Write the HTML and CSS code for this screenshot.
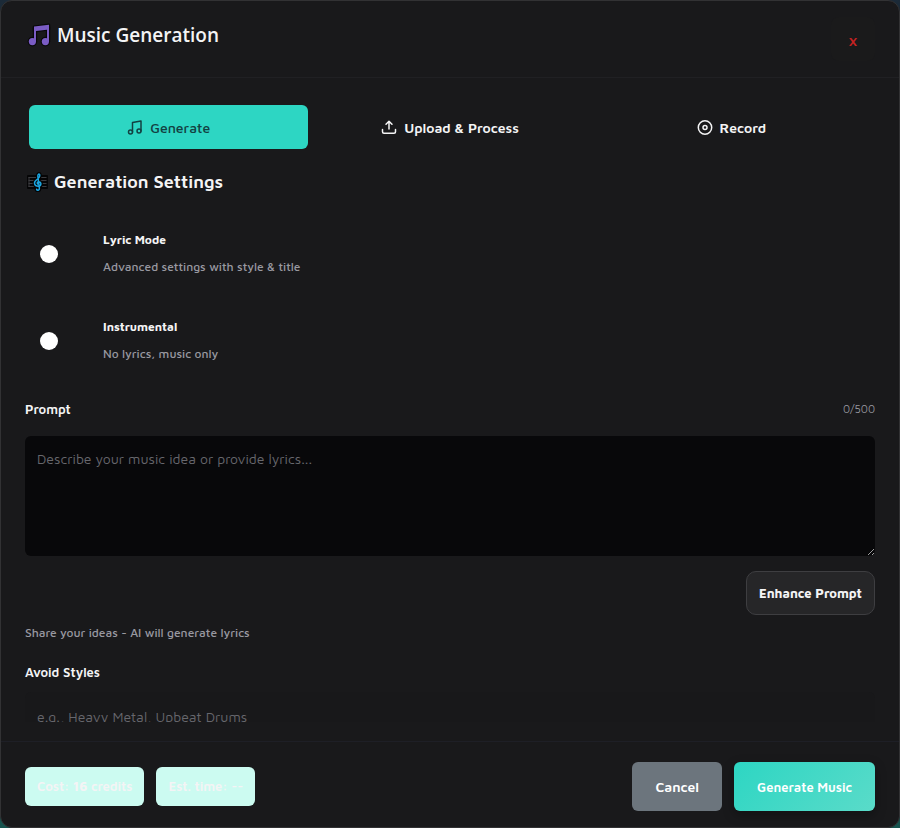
FILE: index.html
```html
<!DOCTYPE html>
<html lang="en">
<head>
<meta charset="utf-8">
<title>Music Generation</title>
<link rel="stylesheet" href="styles.css">
</head>
<body>
<main class="dialog" role="dialog" aria-labelledby="dialog-title">
  <header class="header">
    <h1 class="title" id="dialog-title">
      <svg class="title-icon" viewBox="0 0 24 24" aria-hidden="true">
        <g stroke="#08080a" stroke-width="2.4" stroke-linejoin="round" fill="#08080a">
          <path d="M7 3.600 22 1.800V6.400L7 8.200z"/><path d="M7 5h2v14H7zM20 4h2v14h-2z"/>
          <circle cx="5.400" cy="18.600" r="3.600"/><circle cx="18.400" cy="18.600" r="3.600"/>
        </g>
        <g fill="#7a5cc4">
          <path d="M7 3.600 22 1.800V6.400L7 8.200z"/><path d="M7 5h2v14H7zM20 4h2v14h-2z"/>
          <circle cx="5.400" cy="18.600" r="3.600"/><circle cx="18.400" cy="18.600" r="3.600"/>
        </g>
      </svg>
      Music Generation
    </h1>
    <button class="close" type="button" aria-label="Close">x</button>
  </header>

  <div class="content">
    <div class="tabs" role="tablist">
      <button class="tab tab-active" type="button" role="tab" aria-selected="true">
        <svg class="tab-icon" viewBox="0 0 16 16" aria-hidden="true"><circle cx="3.500" cy="12" r="2"/><circle cx="12" cy="11" r="2"/><path d="M5.500 12V2.500L14 1v10"/></svg>
        Generate
      </button>
      <button class="tab" type="button" role="tab" aria-selected="false">
        <svg class="tab-icon" viewBox="0 0 16 16" aria-hidden="true"><path d="M8 9V1.500M5 4.200 8 1.200l3 3M1.500 9.500v2.300a1.500 1.500 0 0 0 1.500 1.500h10a1.500 1.500 0 0 0 1.500-1.500V9.500"/></svg>
        Upload &amp; Process
      </button>
      <button class="tab" type="button" role="tab" aria-selected="false">
        <svg class="tab-icon" viewBox="0 0 16 16" aria-hidden="true"><circle cx="8" cy="7.500" r="6.700"/><circle cx="8" cy="7.500" r="2"/></svg>
        Record
      </button>
    </div>

    <h2 class="section-title">
      <svg class="section-icon" viewBox="0 0 22 20" aria-hidden="true">
        <rect x="1" y="3" width="21" height="14" rx="1" fill="#050506"/>
        <path d="M2.500 5.500h18M2.500 8.500h18M2.500 11.500h18M2.500 14.500h18M3 5v10" stroke="#3c3c40" fill="none"/>
        <g fill="none" stroke-linecap="round" transform="translate(1 0)">
          <path d="M11.300 12c-1.400 0-1.500-2.200.4-2.200 3 0 3 4.500-.5 4.500-4.300 0-4.700-4.300-1.800-6.300 2.300-1.600 3.800-3.300 3.300-5.300-.3-1.200-1.900-.8-1.900 1.300l1.600 12.300c.2 2.300-2.400 2.500-2.800.9" stroke="#050506" stroke-width="4"/>
          <path d="M11.300 12c-1.400 0-1.500-2.200.4-2.200 3 0 3 4.500-.5 4.500-4.300 0-4.700-4.300-1.800-6.300 2.300-1.600 3.800-3.300 3.300-5.300-.3-1.200-1.900-.8-1.900 1.300l1.600 12.300c.2 2.300-2.400 2.500-2.800.9" stroke="#1ba5e0" stroke-width="1.500"/>
        </g>
      </svg>
      Generation Settings
    </h2>

    <label class="option">
      <input class="switch" type="checkbox" role="switch">
      <span class="option-text"><span class="option-name">Lyric Mode</span><span class="hint">Advanced settings with style &amp; title</span></span>
    </label>
    <label class="option">
      <input class="switch" type="checkbox" role="switch">
      <span class="option-text"><span class="option-name">Instrumental</span><span class="hint">No lyrics, music only</span></span>
    </label>

    <div class="field-head">
      <label class="field-label" for="prompt">Prompt</label>
      <span class="counter">0/500</span>
    </div>
    <textarea class="prompt" id="prompt" placeholder="Describe your music idea or provide lyrics..."></textarea>
    <div class="actions"><button class="enhance" type="button">Enhance Prompt</button></div>
    <p class="hint">Share your ideas - AI will generate lyrics</p>
    <label class="field-label avoid-label" for="avoid">Avoid Styles</label>
    <input class="avoid" id="avoid" type="text" placeholder="e.g., Heavy Metal, Upbeat Drums">
  </div>

  <footer class="footer">
    <span class="badge">Cost: <strong>16</strong> credits</span>
    <span class="badge">Est. time: --</span>
    <button class="cancel" type="button">Cancel</button>
    <button class="submit" type="button">Generate Music</button>
  </footer>
</main>
</body>
</html>
```
FILE: styles.css
```css
* { box-sizing: border-box; }

body {
  margin: 0;
  background: linear-gradient(#1b2a38, #17544f);
  color: #f4f4f5;
  font: 500 13px/20px "Maven Pro", "Noto Sans", sans-serif;
}

button, input, textarea { font: inherit; color: inherit; }
h1, h2, p { margin: 0; }
svg { flex: none; }

.dialog {
  display: flex;
  flex-direction: column;
  height: 100vh;
  border: 1px solid #323234;
  border-radius: 12px;
  background: #19191b;
  overflow: hidden;
}

.header {
  display: flex;
  justify-content: space-between;
  align-items: flex-start;
  padding: 16px 24px;
  border-bottom: 1px solid #202023;
}

.title {
  display: flex;
  align-items: center;
  gap: 6px;
  padding-left: 2px;
  font: 600 19px/36px "Segoe UI", "Open Sans", sans-serif;
}
.title-icon { width: 24px; height: 24px; }

.close {
  width: 44px;
  height: 44px;
  padding: 2px 0 0;
  border: 0;
  border-radius: 8px;
  background: #1a1a1b;
  color: #c52222;
  font-size: 16px;
}

.content {
  flex: 1;
  min-height: 0;
  margin-bottom: 19px;
  padding: 24px 24px 0;
  overflow: hidden;
}

.tabs {
  display: grid;
  grid-template-columns: repeat(3, 1fr);
  gap: 2px;
  padding: 3px 4px;
}
.tab {
  display: flex;
  align-items: center;
  justify-content: center;
  gap: 7px;
  height: 44px;
  padding: 1px 0 0;
  border: 0;
  border-radius: 6px;
  background: none;
  font-size: 14px;
  font-weight: 600;
}
.tab-active { background: #2dd6c3; color: #134142; font-weight: 500; }
.tab-icon {
  width: 16px;
  height: 16px;
  fill: none;
  stroke: currentColor;
  stroke-width: 1.5;
  stroke-linecap: round;
  stroke-linejoin: round;
}

.section-title {
  display: flex;
  align-items: center;
  gap: 6px;
  margin: 16px 0 24px;
  padding-left: 1px;
  font-size: 18px;
  line-height: 28px;
  font-weight: 600;
}
.section-icon { width: 22px; height: 20px; }

.option {
  display: flex;
  align-items: center;
  gap: 20px;
  height: 67px;
  margin-bottom: 20px;
  padding-left: 12px;
}
.switch {
  appearance: none;
  width: 46px;
  height: 24px;
  margin: 0;
  padding: 3px;
}
.switch::before {
  content: "";
  display: block;
  width: 18px;
  height: 18px;
  border-radius: 50%;
  background: #fff;
}
.switch:checked::before { margin-left: auto; }
.option-text { display: flex; flex-direction: column; gap: 7px; }
.option-name { font-size: 12px; font-weight: 700; }
.field-label { font-weight: 600; }
.hint { color: #9898a0; font-size: 12px; }

.field-head { display: flex; align-items: center; justify-content: space-between; margin-top: 25px; }
.counter { color: #9898a0; font-size: 11px; font-weight: 400; }

.prompt, .avoid {
  display: block;
  width: 100%;
  border: 0;
  border-radius: 6px;
  font-size: 14px;
  font-weight: 400;
}
.prompt { height: 120px; margin-top: 17px; padding: 13px 12px; background: #08080a; resize: vertical; }
.prompt::placeholder, .avoid::placeholder { color: #67676d; opacity: 1; }
.avoid { height: 48px; margin-top: 10px; padding: 0 12px; background: #18181a; }
.avoid-label { display: block; margin-top: 19px; }

.actions { display: flex; justify-content: flex-end; margin: 15px 0 8px; }
.enhance {
  height: 44px;
  padding: 0 12px;
  border: 1px solid #3e3e41;
  border-radius: 10px;
  background: #262628;
  font-weight: 700;
}

.footer {
  display: flex;
  align-items: center;
  gap: 12px;
  padding: 20px 24px 16px;
  border-top: 1px solid #1e1f26;
}
.badge {
  padding: 9px 12px 10px;
  border-radius: 6px;
  background: #ccfbf1;
  color: #f4f4f5;
  font-weight: 600;
  white-space: nowrap;
}
.badge strong { font-weight: 700; }
.cancel, .submit { height: 49px; padding: 0 23px; border: 0; border-radius: 6px; color: #fff; font-weight: 600; white-space: nowrap; }
.cancel { margin-left: auto; background: #6c757d; font-size: 14px; }
.submit { background: linear-gradient(135deg, #2dd6c3, #5adbc9); box-shadow: 0 4px 12px rgb(0 0 0 / 30%); }
```
